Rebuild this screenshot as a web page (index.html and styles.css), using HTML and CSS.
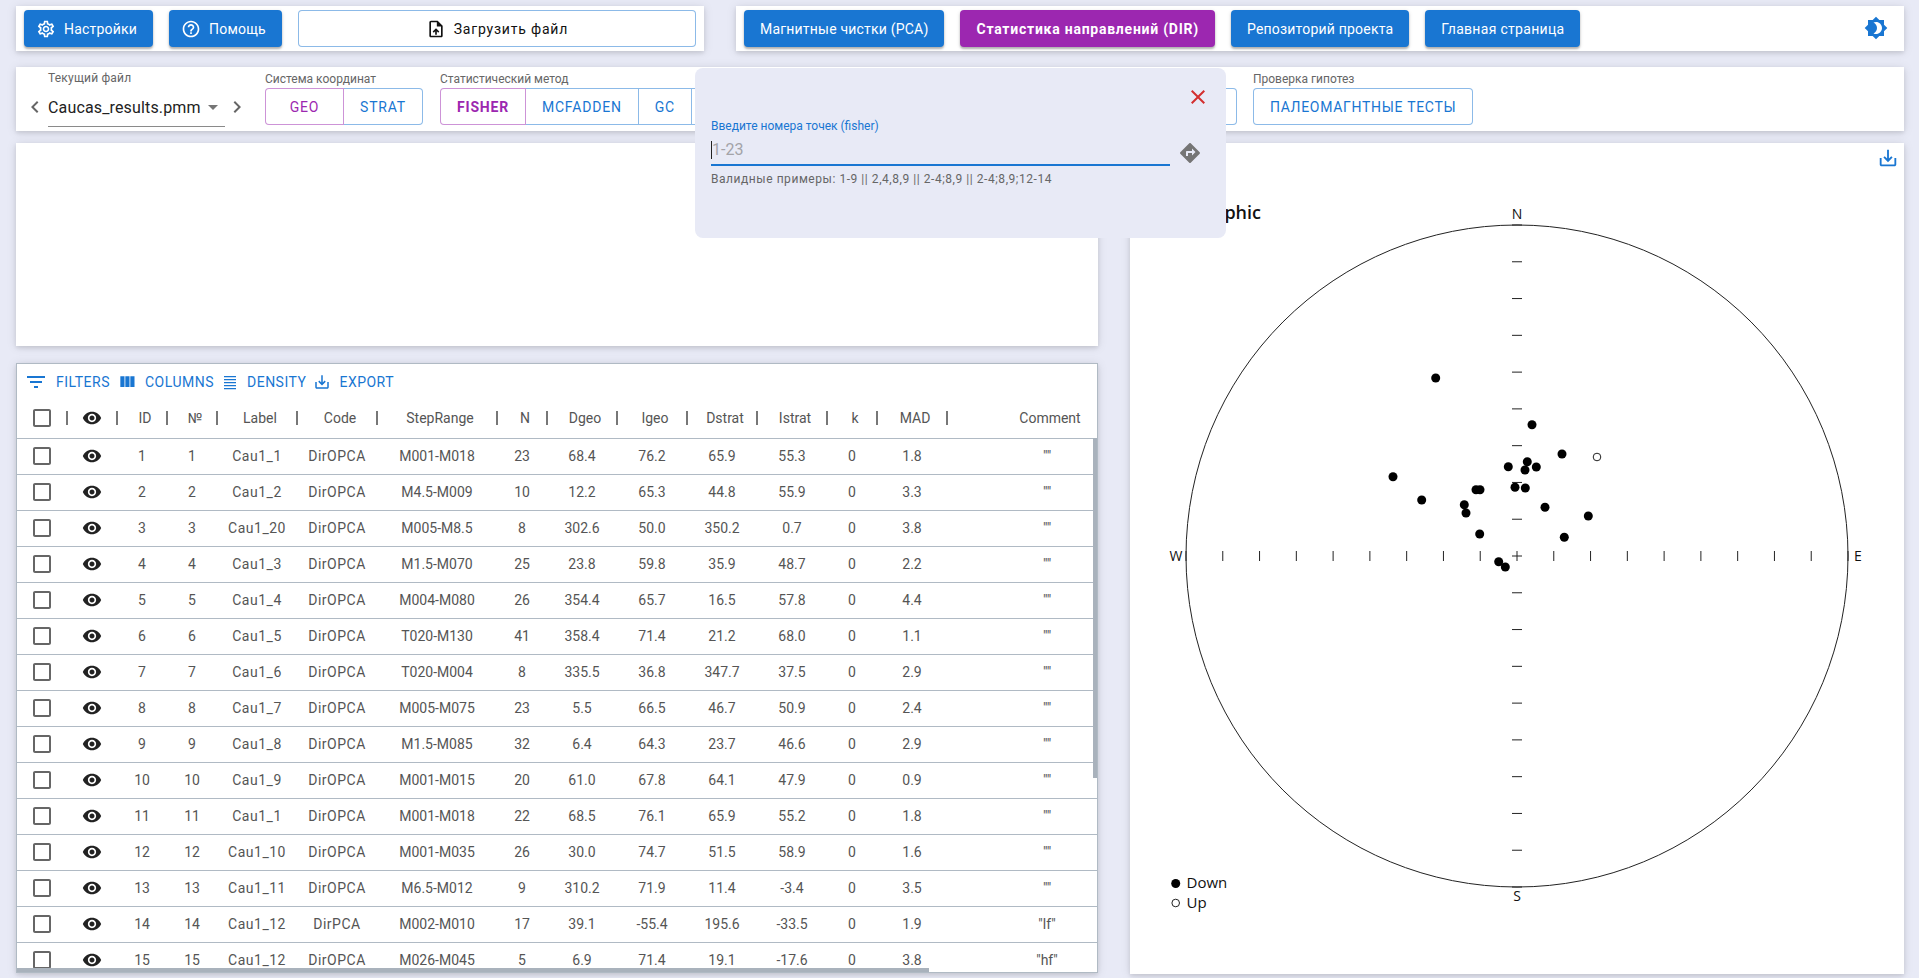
FILE: index.html
```html
<!DOCTYPE html>
<html lang="en">
<head>
<meta charset="UTF-8">
<meta name="viewport" content="width=device-width, initial-scale=1.0">
<title>Статистика направлений</title>
<link rel="stylesheet" href="styles.css">
</head>
<body>
<svg class="icon-defs" aria-hidden="true">
  <symbol id="i-eye" viewBox="0 0 24 24"><path d="M12 4.5C7 4.5 2.73 7.61 1 12c1.73 4.39 6 7.5 11 7.5s9.27-3.11 11-7.5c-1.73-4.39-6-7.5-11-7.5zM12 17c-2.76 0-5-2.24-5-5s2.24-5 5-5 5 2.24 5 5-2.24 5-5 5zm0-8c-1.66 0-3 1.34-3 3s1.34 3 3 3 3-1.34 3-3-1.34-3-3-3z"/></symbol>
  <symbol id="i-check" viewBox="0 0 24 24"><path d="M19 5v14H5V5h14m0-2H5c-1.1 0-2 .9-2 2v14c0 1.1.9 2 2 2h14c1.1 0 2-.9 2-2V5c0-1.1-.9-2-2-2z"/></symbol>
  <symbol id="i-save" viewBox="0 0 24 24"><path d="M19 12v7H5v-7H3v7c0 1.1.9 2 2 2h14c1.1 0 2-.9 2-2v-7h-2zm-6 .67l2.59-2.58L17 11.5l-5 5-5-5 1.41-1.41L11 12.67V3h2z"/></symbol>
</svg>

<div class="app">
  <div class="top-row">
    <div class="panel top-left">
      <button class="btn btn-blue btn-icon">
        <svg class="ico" viewBox="0 0 24 24"><path d="M19.43 12.98c.04-.32.07-.64.07-.98 0-.34-.03-.66-.07-.98l2.11-1.65c.19-.15.24-.42.12-.64l-2-3.46c-.09-.16-.26-.25-.44-.25-.06 0-.12.01-.17.03l-2.49 1c-.52-.4-1.08-.73-1.69-.98l-.38-2.65C14.46 2.18 14.25 2 14 2h-4c-.25 0-.46.18-.49.42l-.38 2.65c-.61.25-1.17.59-1.69.98l-2.49-1c-.06-.02-.12-.03-.18-.03-.17 0-.34.09-.43.25l-2 3.46c-.13.22-.07.49.12.64l2.11 1.65c-.04.32-.07.65-.07.98 0 .33.03.66.07.98l-2.11 1.65c-.19.15-.24.42-.12.64l2 3.46c.09.16.26.25.44.25.06 0 .12-.01.17-.03l2.49-1c.52.4 1.08.73 1.69.98l.38 2.65c.03.24.24.42.49.42h4c.25 0 .46-.18.49-.42l.38-2.65c.61-.25 1.17-.59 1.69-.98l2.49 1c.06.02.12.03.18.03.17 0 .34-.09.43-.25l2-3.46c.12-.22.07-.49-.12-.64l-2.11-1.65zm-1.98-1.71c.04.31.05.52.05.73 0 .21-.02.43-.05.73l-.14 1.13.89.7 1.08.84-.7 1.21-1.27-.51-1.04-.42-.9.68c-.43.32-.84.56-1.25.73l-1.06.43-.16 1.13-.2 1.35h-1.4l-.19-1.35-.16-1.13-1.06-.43c-.43-.18-.83-.41-1.23-.71l-.91-.7-1.06.43-1.27.51-.7-1.21 1.08-.84.89-.7-.14-1.13c-.03-.31-.05-.54-.05-.74s.02-.43.05-.73l.14-1.13-.89-.7-1.08-.84.7-1.21 1.27.51 1.04.42.9-.68c.43-.32.84-.56 1.25-.73l1.06-.43.16-1.13.2-1.35h1.39l.19 1.35.16 1.13 1.06.43c.43.18.83.41 1.23.71l.91.7 1.06-.43 1.27-.51.7 1.21-1.07.85-.89.7.14 1.13zM12 8c-2.21 0-4 1.79-4 4s1.79 4 4 4 4-1.79 4-4-1.79-4-4-4zm0 6c-1.1 0-2-.9-2-2s.9-2 2-2 2 .9 2 2-.9 2-2 2z"/></svg>
        Настройки
      </button>
      <button class="btn btn-blue btn-icon">
        <svg class="ico" viewBox="0 0 24 24"><path d="M11 18h2v-2h-2v2zm1-16C6.48 2 2 6.48 2 12s4.48 10 10 10 10-4.48 10-10S17.52 2 12 2zm0 18c-4.41 0-8-3.59-8-8s3.59-8 8-8 8 3.59 8 8-3.59 8-8 8zm0-14c-2.21 0-4 1.79-4 4h2c0-1.1.9-2 2-2s2 .9 2 2c0 2-3 1.75-3 5h2c0-2.25 3-2.5 3-5 0-2.21-1.79-4-4-4z"/></svg>
        Помощь
      </button>
      <button class="btn btn-upload">
        <svg class="ico" viewBox="0 0 24 24"><path d="M14 2H6c-1.1 0-1.99.9-1.99 2L4 20c0 1.1.89 2 1.99 2H18c1.1 0 2-.9 2-2V8l-6-6zm4 18H6V4h7v5h5v11zM8 15.01l1.41 1.41L11 14.84V19h2v-4.16l1.59 1.59L16 15.01 12.01 11 8 15.01z"/></svg>
        Загрузить файл
      </button>
    </div>
    <div class="panel top-right">
      <button class="btn btn-blue">Магнитные чистки (PCA)</button>
      <button class="btn btn-purple">Статистика направлений (DIR)</button>
      <button class="btn btn-blue">Репозиторий проекта</button>
      <button class="btn btn-blue btn-home">Главная страница</button>
      <svg class="theme-icon" viewBox="0 0 24 24"><path d="M20 8.69V4h-4.69L12 .69 8.69 4H4v4.69L.69 12 4 15.31V20h4.69L12 23.31 15.31 20H20v-4.69L23.31 12 20 8.69zM12 18c-.89 0-1.74-.2-2.5-.55C11.56 16.5 13 14.42 13 12s-1.44-4.5-3.5-5.45C10.26 6.2 11.11 6 12 6c3.31 0 6 2.69 6 6s-2.69 6-6 6z"/></svg>
    </div>
  </div>

  <div class="panel tools">
    <svg class="chevron" viewBox="0 0 24 24"><path d="M15.41 7.41 14 6l-6 6 6 6 1.41-1.41L10.83 12z"/></svg>
    <div class="file-group">
      <div class="group-label file-label">Текущий файл</div>
      <div class="file-select">
        <span>Caucas_results.pmm</span>
        <svg class="caret" viewBox="0 0 24 24"><path d="M7 10l5 5 5-5z"/></svg>
      </div>
    </div>
    <svg class="chevron" viewBox="0 0 24 24"><path d="M10 6 8.59 7.41 13.17 12l-4.58 4.59L10 18l6-6z"/></svg>

    <div class="tool-group coord-group">
      <div class="group-label">Система координат</div>
      <div class="btn-group">
        <button class="seg seg-active seg-geo">GEO</button>
        <button class="seg seg-strat">STRAT</button>
      </div>
    </div>

    <div class="tool-group method-group">
      <div class="group-label">Статистический метод</div>
      <div class="btn-group">
        <button class="seg seg-active seg-bold">FISHER</button>
        <button class="seg">MCFADDEN</button>
        <button class="seg">GC</button>
        <button class="seg seg-covered"></button>
      </div>
    </div>

    <div class="tool-group">
      <div class="group-label">Проверка гипотез</div>
      <div class="btn-group">
        <button class="seg seg-tests">ПАЛЕОМАГНТНЫЕ ТЕСТЫ</button>
      </div>
    </div>
  </div>

  <div class="main-grid">
    <div class="left-col">
      <div class="panel stats-blank"></div>
      <div class="panel grid-box">
        <div class="grid-toolbar">
          <span class="tool-item">
            <svg class="tool-ico-lg" viewBox="0 0 24 24"><path d="M10 18h4v-2h-4v2zM3 6v2h18V6H3zm3 7h12v-2H6v2z"/></svg>
            FILTERS
          </span>
          <span class="tool-item">
            <svg class="tool-ico-md" viewBox="0 0 24 24"><path d="M10 18h5V5h-5v13zm-6 0h5V5H4v13zM16 5v13h5V5h-5z"/></svg>
            COLUMNS
          </span>
          <span class="tool-item">
            <svg class="tool-ico" viewBox="0 0 24 24"><path d="M4 4h16v1.6H4zM4 8h16v1.6H4zM4 12h16v1.6H4zM4 16h16v1.6H4zM4 20h16v1.6H4z"/></svg>
            DENSITY
          </span>
          <span class="tool-item">
            <svg class="tool-ico" viewBox="0 0 24 24"><use href="#i-save"/></svg>
            EXPORT
          </span>
        </div>

        <table class="data-table">
          <colgroup>
            <col class="c51"><col class="c50"><col class="c50"><col class="c50"><col class="c80"><col class="c80"><col class="c120"><col class="c50"><col class="c70"><col class="c70"><col class="c70"><col class="c70"><col class="c50"><col class="c70"><col class="c200">
          </colgroup>
          <thead>
            <tr>
              <th class="th-icon"><svg class="box"><use href="#i-check"/></svg></th>
              <th class="th-icon"><svg class="eye"><use href="#i-eye"/></svg></th>
              <th>ID</th><th>№</th><th>Label</th><th>Code</th><th>StepRange</th><th>N</th><th>Dgeo</th><th>Igeo</th><th>Dstrat</th><th>Istrat</th><th>k</th><th>MAD</th><th class="th-last">Comment</th>
            </tr>
          </thead>
          <tbody>
            <tr><td><svg class="box"><use href="#i-check"/></svg></td><td><svg class="eye"><use href="#i-eye"/></svg></td><td>1</td><td>1</td><td>Cau1_1</td><td>DirOPCA</td><td>M001-M018</td><td>23</td><td>68.4</td><td>76.2</td><td>65.9</td><td>55.3</td><td>0</td><td>1.8</td><td class="comment">""</td></tr>
            <tr><td><svg class="box"><use href="#i-check"/></svg></td><td><svg class="eye"><use href="#i-eye"/></svg></td><td>2</td><td>2</td><td>Cau1_2</td><td>DirOPCA</td><td>M4.5-M009</td><td>10</td><td>12.2</td><td>65.3</td><td>44.8</td><td>55.9</td><td>0</td><td>3.3</td><td class="comment">""</td></tr>
            <tr><td><svg class="box"><use href="#i-check"/></svg></td><td><svg class="eye"><use href="#i-eye"/></svg></td><td>3</td><td>3</td><td>Cau1_20</td><td>DirOPCA</td><td>M005-M8.5</td><td>8</td><td>302.6</td><td>50.0</td><td>350.2</td><td>0.7</td><td>0</td><td>3.8</td><td class="comment">""</td></tr>
            <tr><td><svg class="box"><use href="#i-check"/></svg></td><td><svg class="eye"><use href="#i-eye"/></svg></td><td>4</td><td>4</td><td>Cau1_3</td><td>DirOPCA</td><td>M1.5-M070</td><td>25</td><td>23.8</td><td>59.8</td><td>35.9</td><td>48.7</td><td>0</td><td>2.2</td><td class="comment">""</td></tr>
            <tr><td><svg class="box"><use href="#i-check"/></svg></td><td><svg class="eye"><use href="#i-eye"/></svg></td><td>5</td><td>5</td><td>Cau1_4</td><td>DirOPCA</td><td>M004-M080</td><td>26</td><td>354.4</td><td>65.7</td><td>16.5</td><td>57.8</td><td>0</td><td>4.4</td><td class="comment">""</td></tr>
            <tr><td><svg class="box"><use href="#i-check"/></svg></td><td><svg class="eye"><use href="#i-eye"/></svg></td><td>6</td><td>6</td><td>Cau1_5</td><td>DirOPCA</td><td>T020-M130</td><td>41</td><td>358.4</td><td>71.4</td><td>21.2</td><td>68.0</td><td>0</td><td>1.1</td><td class="comment">""</td></tr>
            <tr><td><svg class="box"><use href="#i-check"/></svg></td><td><svg class="eye"><use href="#i-eye"/></svg></td><td>7</td><td>7</td><td>Cau1_6</td><td>DirOPCA</td><td>T020-M004</td><td>8</td><td>335.5</td><td>36.8</td><td>347.7</td><td>37.5</td><td>0</td><td>2.9</td><td class="comment">""</td></tr>
            <tr><td><svg class="box"><use href="#i-check"/></svg></td><td><svg class="eye"><use href="#i-eye"/></svg></td><td>8</td><td>8</td><td>Cau1_7</td><td>DirOPCA</td><td>M005-M075</td><td>23</td><td>5.5</td><td>66.5</td><td>46.7</td><td>50.9</td><td>0</td><td>2.4</td><td class="comment">""</td></tr>
            <tr><td><svg class="box"><use href="#i-check"/></svg></td><td><svg class="eye"><use href="#i-eye"/></svg></td><td>9</td><td>9</td><td>Cau1_8</td><td>DirOPCA</td><td>M1.5-M085</td><td>32</td><td>6.4</td><td>64.3</td><td>23.7</td><td>46.6</td><td>0</td><td>2.9</td><td class="comment">""</td></tr>
            <tr><td><svg class="box"><use href="#i-check"/></svg></td><td><svg class="eye"><use href="#i-eye"/></svg></td><td>10</td><td>10</td><td>Cau1_9</td><td>DirOPCA</td><td>M001-M015</td><td>20</td><td>61.0</td><td>67.8</td><td>64.1</td><td>47.9</td><td>0</td><td>0.9</td><td class="comment">""</td></tr>
            <tr><td><svg class="box"><use href="#i-check"/></svg></td><td><svg class="eye"><use href="#i-eye"/></svg></td><td>11</td><td>11</td><td>Cau1_1</td><td>DirOPCA</td><td>M001-M018</td><td>22</td><td>68.5</td><td>76.1</td><td>65.9</td><td>55.2</td><td>0</td><td>1.8</td><td class="comment">""</td></tr>
            <tr><td><svg class="box"><use href="#i-check"/></svg></td><td><svg class="eye"><use href="#i-eye"/></svg></td><td>12</td><td>12</td><td>Cau1_10</td><td>DirOPCA</td><td>M001-M035</td><td>26</td><td>30.0</td><td>74.7</td><td>51.5</td><td>58.9</td><td>0</td><td>1.6</td><td class="comment">""</td></tr>
            <tr><td><svg class="box"><use href="#i-check"/></svg></td><td><svg class="eye"><use href="#i-eye"/></svg></td><td>13</td><td>13</td><td>Cau1_11</td><td>DirOPCA</td><td>M6.5-M012</td><td>9</td><td>310.2</td><td>71.9</td><td>11.4</td><td>-3.4</td><td>0</td><td>3.5</td><td class="comment">""</td></tr>
            <tr><td><svg class="box"><use href="#i-check"/></svg></td><td><svg class="eye"><use href="#i-eye"/></svg></td><td>14</td><td>14</td><td>Cau1_12</td><td>DirPCA</td><td>M002-M010</td><td>17</td><td>39.1</td><td>-55.4</td><td>195.6</td><td>-33.5</td><td>0</td><td>1.9</td><td class="comment">"lf"</td></tr>
            <tr><td><svg class="box"><use href="#i-check"/></svg></td><td><svg class="eye"><use href="#i-eye"/></svg></td><td>15</td><td>15</td><td>Cau1_12</td><td>DirOPCA</td><td>M026-M045</td><td>5</td><td>6.9</td><td>71.4</td><td>19.1</td><td>-17.6</td><td>0</td><td>3.8</td><td class="comment">"hf"</td></tr>
          </tbody>
        </table>
        <div class="scroll-v"></div>
        <div class="scroll-h"></div>
      </div>
    </div>

    <div class="panel chart-box">
      <svg class="chart-save" viewBox="0 0 24 24"><use href="#i-save"/></svg>
      <svg class="stereo" viewBox="0 0 774 831">
        <text class="chart-title" x="131" y="76">Stereographic</text>
        <circle class="net" cx="387" cy="413" r="331"/>
        <path class="ticks" d="M92.78 408v10M129.56 408v10M166.33 408v10M203.11 408v10M239.89 408v10M276.67 408v10M313.44 408v10M350.22 408v10M423.78 408v10M460.56 408v10M497.33 408v10M534.11 408v10M570.89 408v10M607.67 408v10M644.44 408v10M681.22 408v10M382 118.78h10M382 155.56h10M382 192.33h10M382 229.11h10M382 265.89h10M382 302.67h10M382 339.44h10M382 376.22h10M382 449.78h10M382 486.56h10M382 523.33h10M382 560.11h10M382 596.89h10M382 633.67h10M382 670.44h10M382 707.22h10M382 413h10M387 408v10M382 82h10M382 744h10M56 408v10M718 408v10"/>
        <text class="axis" x="387" y="76">N</text>
        <text class="axis" x="387" y="758">S</text>
        <text class="axis" x="46" y="418">W</text>
        <text class="axis" x="728" y="418">E</text>
        <g class="dots">
          <circle cx="305.7" cy="235" r="4.5"/><circle cx="402" cy="281.7" r="4.5"/><circle cx="432" cy="311" r="4.5"/><circle cx="397.3" cy="318.7" r="4.5"/><circle cx="378.3" cy="323.7" r="4.5"/><circle cx="406.3" cy="324" r="4.5"/><circle cx="395" cy="327" r="4.5"/><circle cx="263" cy="333.7" r="4.5"/><circle cx="385" cy="344.3" r="4.5"/><circle cx="395.3" cy="345" r="4.5"/><circle cx="346" cy="346.7" r="4.5"/><circle cx="350" cy="346.7" r="4.5"/><circle cx="291.7" cy="357" r="4.5"/><circle cx="334.3" cy="361.7" r="4.5"/><circle cx="415" cy="364.3" r="4.5"/><circle cx="458.3" cy="373" r="4.5"/><circle cx="336" cy="370" r="4.5"/><circle cx="349.7" cy="391" r="4.5"/><circle cx="434.3" cy="394.3" r="4.5"/><circle cx="368.7" cy="418.7" r="4.5"/><circle cx="375.3" cy="424" r="4.5"/>
        </g>
        <circle class="open-dot" cx="467" cy="314" r="3.8"/>
        <circle cx="45.7" cy="740.5" r="4.5"/>
        <circle class="open-dot" cx="45.7" cy="760" r="3.8"/>
        <text class="legend" x="56.5" y="745">Down</text>
        <text class="legend" x="56.5" y="765">Up</text>
      </svg>
    </div>
  </div>

  <div class="points-modal">
    <svg class="modal-close" viewBox="0 0 24 24"><path d="M19 6.41 17.59 5 12 10.59 6.41 5 5 6.41 10.59 12 5 17.59 6.41 19 12 13.41 17.59 19 19 17.59 13.41 12z"/></svg>
    <div class="modal-label">Введите номера точек (fisher)</div>
    <div class="modal-row">
      <div class="modal-input"><span class="input-caret"></span>1-23</div>
      <svg class="modal-go" viewBox="0 0 24 24"><path d="M21.71 11.29l-9-9c-.39-.39-1.02-.39-1.41 0l-9 9c-.39.39-.39 1.02 0 1.41l9 9c.39.39 1.02.39 1.41 0l9-9c.39-.38.39-1.01 0-1.41zM14 14.5V12h-4v3H8v-4c0-.55.45-1 1-1h5V7.5l3.5 3.5-3.5 3.5z"/></svg>
    </div>
    <div class="modal-help">Валидные примеры: 1-9 || 2,4,8,9 || 2-4;8,9 || 2-4;8,9;12-14</div>
  </div>
</div>
</body>
</html>
```

FILE: styles.css
```css
html, body, div, span, button, table, th, td {
  margin: 0;
  padding: 0;
  box-sizing: border-box;
}

body {
  background-color: #e8eaf6;
  font-family: Roboto, "Liberation Sans", sans-serif;
  overflow: hidden;
}

.icon-defs {
  display: none;
}

.app {
  position: relative;
  width: 1919px;
  height: 978px;
  padding: 6px 15px 0 16px;
}

.panel {
  background-color: #fff;
  box-shadow: 0 2px 4px rgba(0, 0, 0, 0.1), 0 1px 10px rgba(0, 0, 0, 0.1);
}

.top-row {
  display: flex;
  gap: 32px;
}

.top-left,
.top-right {
  display: flex;
  gap: 16px;
  height: 45px;
  padding: 4px 8px;
}

.top-left {
  width: 688px;
}

.top-right {
  flex: 1;
  align-items: flex-start;
}

.btn {
  display: flex;
  align-items: center;
  justify-content: center;
  height: 37px;
  padding: 0 16px;
  border: 0;
  border-radius: 4px;
  font-family: inherit;
  font-size: 14px;
  letter-spacing: 0.2px;
  white-space: nowrap;
}

.btn-blue {
  background-color: #1976d2;
  color: #fff;
  box-shadow: 0 2px 2px rgba(0, 0, 0, 0.25), 0 1px 4px rgba(0, 0, 0, 0.12);
}

.btn-purple {
  background-color: #9c27b0;
  color: #fff;
  font-weight: 700;
  letter-spacing: 0.76px;
  box-shadow: 0 2px 2px rgba(0, 0, 0, 0.25), 0 1px 4px rgba(0, 0, 0, 0.12);
}

.btn-home {
  letter-spacing: 0.3px;
}

.btn-icon {
  padding-left: 12px;
  gap: 8px;
}

.btn-upload {
  flex: 1;
  gap: 8px;
  background-color: #fff;
  color: #111;
  letter-spacing: 0.8px;
  border: 1px solid rgba(25, 118, 210, 0.5);
}

.ico {
  width: 20px;
  height: 20px;
  fill: currentColor;
}

.theme-icon {
  width: 24px;
  height: 24px;
  margin: 6px 8px 0 auto;
  fill: #1976d2;
}

.tools {
  display: flex;
  align-items: flex-start;
  height: 64px;
  margin-top: 16px;
  padding-left: 7px;
}

.chevron {
  width: 24px;
  height: 24px;
  margin-top: 28px;
  fill: #666;
}

.file-group {
  width: 178px;
  padding-left: 1px;
}

.group-label {
  height: 14px;
  margin-bottom: 2px;
  font-size: 12px;
  line-height: 14px;
  color: #666;
  white-space: nowrap;
}

.file-label {
  margin-top: 4px;
  margin-bottom: 3px;
  letter-spacing: 0.2px;
}

.file-select {
  display: flex;
  align-items: center;
  justify-content: space-between;
  height: 39px;
  border-bottom: 1px solid #8a8a8a;
  font-size: 16px;
  letter-spacing: 0.15px;
  color: #222;
}

.caret {
  width: 24px;
  height: 24px;
  fill: #757575;
}

.tool-group {
  margin-top: 5px;
  margin-left: 16px;
}

.method-group {
  margin-left: 17px;
}

.btn-group {
  display: flex;
}

.seg {
  height: 37px;
  margin-left: -1px;
  padding: 0 16px;
  background-color: #fff;
  border: 1px solid rgba(25, 118, 210, 0.5);
  font-family: inherit;
  font-size: 14px;
  letter-spacing: 0.8px;
  color: #1976d2;
  white-space: nowrap;
}

.seg:first-child {
  margin-left: 0;
  border-top-left-radius: 4px;
  border-bottom-left-radius: 4px;
}

.seg:last-child {
  border-top-right-radius: 4px;
  border-bottom-right-radius: 4px;
}

.seg-active {
  position: relative;
  z-index: 1;
  border-color: rgba(156, 39, 176, 0.5);
  color: #9c27b0;
}

.seg-bold {
  font-weight: 700;
}

.seg-geo {
  width: 79px;
}

.seg-strat {
  width: 80px;
}

.seg-covered {
  width: 546px;
}

.seg-tests {
  letter-spacing: 0.7px;
}

.main-grid {
  display: grid;
  grid-template-columns: 1082px 774px;
  gap: 32px;
  margin-top: 12px;
}

.left-col {
  display: flex;
  flex-direction: column;
  gap: 17px;
}

.stats-blank {
  height: 203px;
}

.grid-box {
  position: relative;
  height: 610px;
  overflow: hidden;
  border: 1px solid #b0bac4;
}

.grid-toolbar {
  display: flex;
  align-items: center;
  gap: 7px;
  height: 35px;
  padding-left: 7px;
  font-size: 14px;
  letter-spacing: 0.5px;
  color: #1976d2;
}

.tool-item {
  display: flex;
  align-items: center;
  gap: 8px;
}

.tool-ico-lg {
  width: 24px;
  height: 24px;
  fill: currentColor;
}

.tool-ico-md {
  width: 20px;
  height: 20px;
  fill: currentColor;
}

.tool-ico {
  width: 18px;
  height: 18px;
  fill: currentColor;
}

.data-table {
  table-layout: fixed;
  width: 1131px;
  border-collapse: collapse;
  font-size: 14px;
  color: #555;
}

.c50 { width: 50px; }
.c51 { width: 51px; }
.c70 { width: 70px; }
.c80 { width: 80px; }
.c120 { width: 120px; }
.c200 { width: 200px; }

.data-table th {
  height: 39px;
  padding-left: 4px;
  font-weight: 400;
  background: linear-gradient(#777, #777) right center / 2px 14px no-repeat;
  border-bottom: 1px solid #b0bac4;
}

.data-table th.th-icon {
  padding-left: 0;
  padding-right: 2px;
}

.data-table th.th-last {
  background: none;
}

.data-table td {
  height: 36px;
  padding-right: 2px;
  text-align: center;
  border-bottom: 1px solid #b0bac4;
}

.data-table td:nth-child(5),
.data-table td:nth-child(6) {
  letter-spacing: 0.5px;
}

.data-table svg {
  display: block;
  width: 24px;
  height: 24px;
  margin: 0 auto;
}

.data-table svg.eye {
  width: 20px;
  height: 20px;
  fill: #222;
}

.data-table .box {
  fill: #666;
}

.comment {
  font-size: 14px;
}

.scroll-v {
  position: absolute;
  top: 74px;
  right: 0;
  width: 4px;
  height: 340px;
  background-color: #a9b2bc;
}

.scroll-h {
  position: absolute;
  bottom: 0;
  left: 0;
  width: 912px;
  height: 4px;
  background-color: #a9b2bc;
}

.chart-box {
  position: relative;
  height: 831px;
}

.stereo {
  display: block;
  width: 774px;
  height: 831px;
  font-family: "Open Sans", "Noto Sans", sans-serif;
}

.chart-save {
  position: absolute;
  top: 4px;
  right: 5px;
  width: 22px;
  height: 22px;
  fill: #1976d2;
}

.chart-title {
  font-size: 18px;
  font-weight: 600;
  text-anchor: end;
  fill: #111;
}

.net {
  fill: none;
  stroke: #222;
  stroke-width: 1;
}

.ticks {
  fill: none;
  stroke: #222;
  stroke-width: 1;
}

.axis {
  font-size: 14px;
  text-anchor: middle;
  fill: #111;
}

.open-dot {
  fill: #fff;
  stroke: #222;
  stroke-width: 1;
}

.legend {
  font-size: 15px;
  fill: #111;
}

.points-modal {
  position: absolute;
  top: 68px;
  left: 695px;
  width: 531px;
  height: 170px;
  padding: 17px 16px 0;
  background-color: #e8eaf6;
  border-radius: 8px;
}

.modal-close {
  display: block;
  width: 24px;
  height: 24px;
  margin-left: auto;
  fill: #d32f2f;
}

.modal-label {
  margin-top: 10px;
  font-size: 12px;
  line-height: 14px;
  color: #1976d2;
}

.modal-row {
  display: flex;
  align-items: center;
  gap: 8px;
}

.modal-input {
  display: flex;
  align-items: center;
  width: 459px;
  height: 33px;
  padding-top: 2px;
  border-bottom: 2px solid #1976d2;
  font-size: 16px;
  color: #a3a3a8;
}

.input-caret {
  width: 1px;
  height: 18px;
  background-color: #222;
}

.modal-go {
  width: 24px;
  height: 24px;
  margin-top: 6px;
  fill: #757575;
}

.modal-help {
  margin-top: 6px;
  font-size: 12px;
  line-height: 14px;
  letter-spacing: 0.55px;
  color: #666;
}
```
